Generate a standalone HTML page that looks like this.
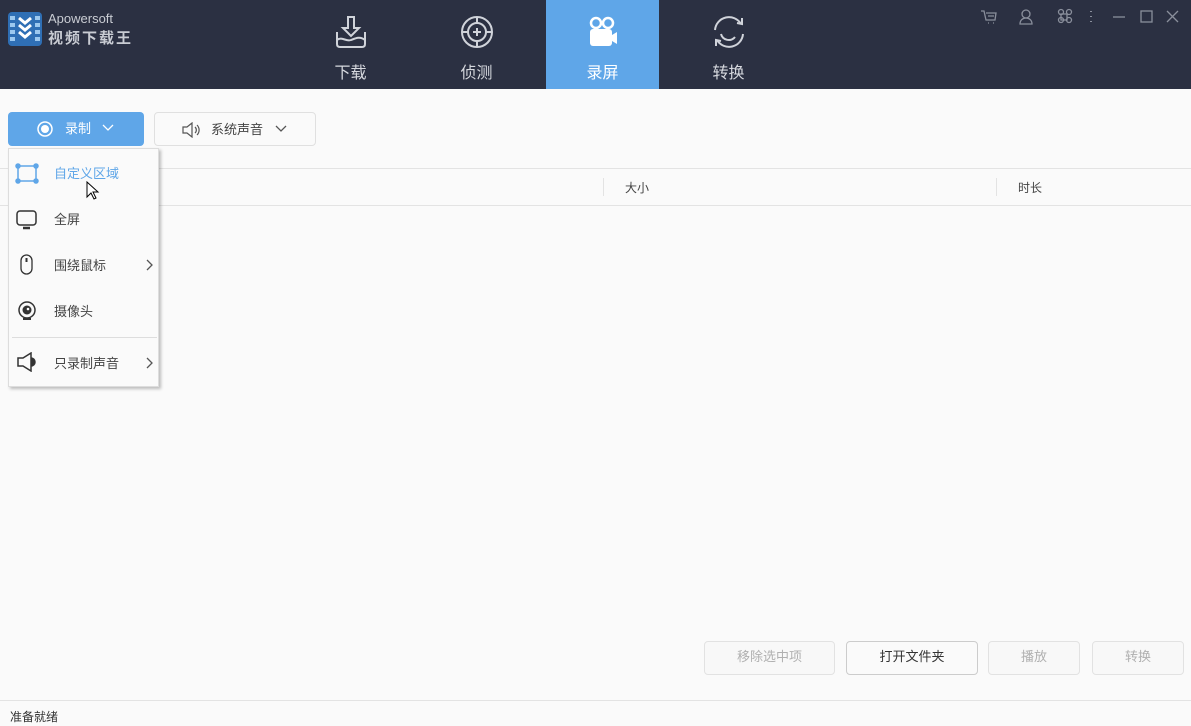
<!DOCTYPE html>
<html><head><meta charset="utf-8"><style>
*{margin:0;padding:0;box-sizing:border-box}
body{width:1191px;height:726px;background:#fafafa;font-family:"Liberation Sans","Noto Sans CJK SC",sans-serif;position:relative;overflow:hidden;color:#333}
.hdr{position:absolute;left:0;top:0;width:1191px;height:89px;background:#2b3042}
.tab{position:absolute;top:0;width:113px;height:89px;text-align:center;color:#d6d8de;font-size:16px}
.tab svg{position:absolute;left:50%;top:14px;transform:translateX(-50%)}
.tab span{position:absolute;left:0;right:0;top:59px}
.abs{position:absolute}
.btn{position:absolute;border:1px solid #e2e2e2;border-radius:4px;background:#f8f8f8;font-size:13px;text-align:center;line-height:30px;color:#b0b0b0}
.mi{position:absolute;left:54px;font-size:13px;color:#444}
</style></head><body>
<div class="hdr">
 <svg class="abs" style="left:8px;top:12px" width="34" height="34" viewBox="0 0 34 34"><rect width="34" height="34" rx="4" fill="#2f6fb5"/><rect x="2" y="4" width="5" height="4" fill="#9cc8ef"/><rect x="2" y="11" width="5" height="4" fill="#9cc8ef"/><rect x="2" y="18" width="5" height="4" fill="#9cc8ef"/><rect x="2" y="25" width="5" height="4" fill="#9cc8ef"/><rect x="27" y="4" width="5" height="4" fill="#9cc8ef"/><rect x="27" y="11" width="5" height="4" fill="#9cc8ef"/><rect x="27" y="18" width="5" height="4" fill="#9cc8ef"/><rect x="27" y="25" width="5" height="4" fill="#9cc8ef"/><path d="M11 6l6 5 6-5M11 13l6 5 6-5M11 20l6 5 6-5" stroke="#fff" stroke-width="3" fill="none"/></svg>
 <div class="abs" style="left:48px;top:11px;color:#c9ccd3;font-size:13px">Apowersoft</div>
 <div class="abs" style="left:48px;top:27px;color:#c9ccd3;font-size:15px;letter-spacing:2px;font-weight:bold">视频下载王</div>
 <div class="tab" style="left:294px"><svg width="36" height="36" viewBox="0 0 36 36" fill="none" stroke="#d0d3da" stroke-width="2"><path d="M15 3h6v11h5l-8 8-8-8h5z"/><path d="M4 18v12c0 2 1 3 3 3h22c2 0 3-1 3-3V18"/><path d="M4 26c5-4 9 2 14 0s9-4 14 0"/></svg><span>下载</span></div>
 <div class="tab" style="left:420px"><svg width="36" height="36" viewBox="0 0 36 36" fill="none" stroke="#d0d3da" stroke-width="2"><circle cx="18" cy="18" r="15"/><circle cx="18" cy="18" r="9"/><path d="M18 3v6M18 27v6M3 18h6M27 18h6M14 18h8M18 14v8"/></svg><span>侦测</span></div>
 <div class="tab" style="left:546px;background:#5fa6e8;color:#fff"><svg width="36" height="36" viewBox="0 0 36 36"><circle cx="11" cy="9" r="5" fill="none" stroke="#fff" stroke-width="2.5"/><circle cx="23" cy="9" r="5" fill="none" stroke="#fff" stroke-width="2.5"/><rect x="5" y="15" width="22" height="17" rx="3" fill="#fff"/><path d="M27 21l5-3v12l-5-3z" fill="#fff"/></svg><span>录屏</span></div>
 <div class="tab" style="left:672px"><svg width="38" height="36" viewBox="0 0 38 36" fill="none" stroke="#d0d3da" stroke-width="2"><path d="M5 16A14 14 0 0 1 31 10"/><path d="M27 9l5 1 0-6"/><path d="M33 20A14 14 0 0 1 7 26"/><path d="M11 27l-5-1 0 6"/><path d="M11 20a8 8 0 0 0 14 3"/></svg><span>转换</span></div>
 <svg class="abs" style="left:980px;top:8px" width="200" height="18" viewBox="0 0 200 18" fill="none" stroke="#8a8f9c" stroke-width="1.3"><path d="M1 3h3l2 9h9l1-7H6M8 15h1M13 15h1M8 8h6"/><circle cx="46" cy="6" r="4"/><path d="M40 16c0-4 3-6 6-6s6 2 6 6z"/><path d="M81 6h6v6h-6z"/><circle cx="81" cy="4" r="2.5"/><circle cx="89" cy="4" r="2.5"/><circle cx="81" cy="12" r="2.5"/><circle cx="89" cy="12" r="2.5"/><path d="M111 3v1M111 8v1M111 13v1" stroke-width="2"/><path d="M133 9h12"/><rect x="161" y="3" width="11" height="11"/><path d="M187 3l11 11M198 3l-11 11"/></svg>
</div>
<div class="abs" style="left:8px;top:112px;width:136px;height:34px;background:#5fa6e8;border-radius:4px;color:#fff;font-size:13px">
 <svg class="abs" style="left:29px;top:9px" width="16" height="16"><circle cx="8" cy="8" r="7" fill="none" stroke="#fff" stroke-width="1.5"/><circle cx="8" cy="8" r="4" fill="#fff"/></svg>
 <span class="abs" style="left:57px;top:6px">录制</span>
 <svg class="abs" style="left:94px;top:12px" width="12" height="8"><path d="M1 1l5 5 5-5" fill="none" stroke="#fff" stroke-width="1.3"/></svg>
</div>
<div class="abs" style="left:154px;top:112px;width:162px;height:34px;border:1px solid #e0e0e0;border-radius:4px;background:#fafafa;font-size:13px;color:#444">
 <svg class="abs" style="left:27px;top:9px" width="20" height="16" fill="none" stroke="#555" stroke-width="1.2"><path d="M1 5h4l5-4v14l-5-4H1z"/><path d="M13 5a4 4 0 0 1 0 6M15 3a7 7 0 0 1 0 10"/></svg>
 <span class="abs" style="left:56px;top:6px">系统声音</span>
 <svg class="abs" style="left:120px;top:12px" width="12" height="8"><path d="M1 1l5 5 5-5" fill="none" stroke="#555" stroke-width="1.3"/></svg>
</div>
<div class="abs" style="left:0;top:168px;width:1191px;height:1px;background:#e3e3e3"></div>
<div class="abs" style="left:0;top:205px;width:1191px;height:1px;background:#e3e3e3"></div>
<div class="abs" style="left:603px;top:178px;width:1px;height:18px;background:#e3e3e3"></div>
<div class="abs" style="left:996px;top:178px;width:1px;height:18px;background:#e3e3e3"></div>
<div class="abs" style="left:625px;top:179px;font-size:12px;color:#444">大小</div>
<div class="abs" style="left:1018px;top:179px;font-size:12px;color:#444">时长</div>
<div class="abs" style="left:8px;top:148px;width:151px;height:239px;background:#fafafa;border:1px solid #ddd;box-shadow:2px 2px 3px rgba(0,0,0,.25)">
 <svg class="abs" style="left:6px;top:14px" width="24" height="22" fill="none" stroke="#5fa6e8" stroke-width="1.5"><rect x="3" y="3" width="18" height="15"/><circle cx="3" cy="3" r="2" fill="#5fa6e8"/><circle cx="21" cy="3" r="2" fill="#5fa6e8"/><circle cx="3" cy="18" r="2" fill="#5fa6e8"/><circle cx="21" cy="18" r="2" fill="#5fa6e8"/></svg>
 <div class="mi" style="left:45px;top:14px;color:#5fa6e8">自定义区域</div>
 <svg class="abs" style="left:7px;top:61px" width="22" height="20" fill="none" stroke="#333" stroke-width="1.5"><rect x="1" y="1" width="19" height="14" rx="3"/><path d="M7 18h7" stroke-width="2.5"/></svg>
 <div class="mi" style="left:45px;top:60px">全屏</div>
 <svg class="abs" style="left:11px;top:105px" width="14" height="22" fill="none" stroke="#333" stroke-width="1.3"><rect x="1" y="1" width="11" height="19" rx="5.5"/><path d="M6.5 4v4" stroke-width="2"/></svg>
 <div class="mi" style="left:45px;top:106px">围绕鼠标</div>
 <svg class="abs" style="left:137px;top:110px" width="8" height="12"><path d="M1 1l5 5-5 5" fill="none" stroke="#555" stroke-width="1.3"/></svg>
 <svg class="abs" style="left:8px;top:152px" width="20" height="20"><circle cx="10" cy="9" r="8" fill="none" stroke="#333" stroke-width="1.5"/><circle cx="10" cy="9" r="4.5" fill="#333"/><circle cx="11" cy="8" r="1.3" fill="#fff"/><rect x="6" y="17" width="8" height="2" fill="#333"/></svg>
 <div class="mi" style="left:45px;top:152px">摄像头</div>
 <div class="abs" style="left:3px;top:188px;width:145px;height:1px;background:#ddd"></div>
 <svg class="abs" style="left:7px;top:203px" width="22" height="20" fill="none" stroke="#333" stroke-width="1.5"><path d="M2 6h5l8-5v18l-8-5H2z"/><path d="M15 6a4 4 0 0 1 0 8" fill="#333"/></svg>
 <div class="mi" style="left:45px;top:204px">只录制声音</div>
 <svg class="abs" style="left:137px;top:208px" width="8" height="12"><path d="M1 1l5 5-5 5" fill="none" stroke="#555" stroke-width="1.3"/></svg>
</div>
<svg class="abs" style="left:86px;top:181px" width="14" height="20"><path d="M1 1v15l4-4 3 6 2-1-3-6h5z" fill="#fff" stroke="#000" stroke-width="1"/></svg>
<div class="btn" style="left:704px;top:641px;width:131px;height:34px">移除选中项</div>
<div class="btn" style="left:846px;top:641px;width:132px;height:34px;border-color:#ccc;color:#333;background:#fafafa">打开文件夹</div>
<div class="btn" style="left:988px;top:641px;width:92px;height:34px">播放</div>
<div class="btn" style="left:1092px;top:641px;width:92px;height:34px">转换</div>
<div class="abs" style="left:0;top:700px;width:1191px;height:1px;background:#e3e3e3"></div>
<div class="abs" style="left:10px;top:708px;font-size:12px;color:#333">准备就绪</div>
</body></html>
